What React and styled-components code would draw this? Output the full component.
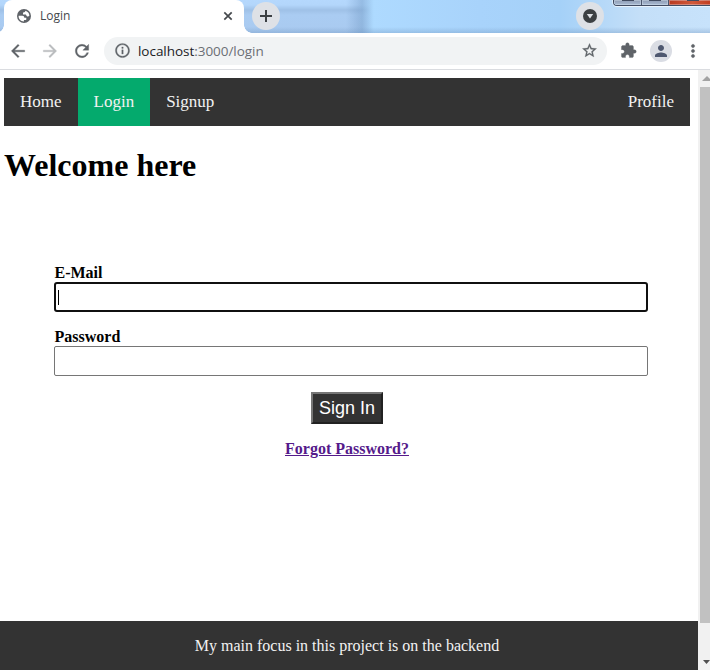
import React from "react";
import styled, { createGlobalStyle } from "styled-components";
import {
  MdArrowBack,
  MdArrowForward,
  MdRefresh,
  MdInfoOutline,
  MdStarBorder,
  MdExtension,
  MdPerson,
  MdMoreVert,
} from "react-icons/md";

const GlobalStyle = createGlobalStyle`
  * { box-sizing: border-box; }
  html, body { margin: 0; padding: 0; overflow: hidden; }
  body { background: #fff; font-family: "Liberation Serif", "Times New Roman", serif; }
`;

const Window = styled.div`
  width: 710px;
  height: 670px;
  display: flex;
  flex-direction: column;
  overflow: hidden;
  background: #fff;
`;

const TabStrip = styled.header`
  position: relative;
  height: 33px;
  flex: none;
  display: flex;
  align-items: flex-start;
  padding-left: 4px;
  background:
    linear-gradient(90deg, transparent 346px, rgba(105, 145, 190, 0.4) 362px, transparent 374px),
    linear-gradient(180deg, transparent 27px, rgba(110, 145, 185, 0.35) 33px),
    linear-gradient(90deg, transparent 358px, #aedaff 372px, #a8d3fb 480px, #a5d1f8 560px, #c4dff8 640px, #c7e2fb 710px),
    linear-gradient(180deg, #b5d8fd 0, #b3d6fb 5px, #9fc1e7 10px, #aaccf2 15px, #a9caf0 33px);
`;

const Tab = styled.div`
  position: relative;
  width: 240px;
  height: 33px;
  display: flex;
  align-items: center;
  padding: 0 11px 1px 13px;
  border-radius: 8px 8px 0 0;
  background: #fff;
  &::before,
  &::after {
    content: "";
    position: absolute;
    bottom: 0;
    width: 8px;
    height: 8px;
  }
  &::before {
    left: -8px;
    background: radial-gradient(circle at 0 0, transparent 7.5px, #fff 8px);
  }
  &::after {
    right: -8px;
    background: radial-gradient(circle at 100% 0, transparent 7.5px, #fff 8px);
  }
`;

const TabTitle = styled.span`
  flex: 1;
  margin-left: 9px;
  font: 12px/16px "Open Sans", "Noto Sans", sans-serif;
  color: #45494d;
`;

const RoundButton = styled.div`
  width: 28px;
  height: 28px;
  flex: none;
  display: grid;
  place-items: center;
  margin: 2px 0 0 ${(p) => p.$gap}px;
  border-radius: 50%;
  background: #dee1e6;
`;

const CaptionButtons = styled.div`
  position: absolute;
  top: 0;
  right: 0;
  display: flex;
  width: 97px;
  height: 6px;
  border: 1px solid #424c62;
  border-width: 0 0 1px 1px;
  border-radius: 0 0 0 4px;
  box-shadow: 0 1px 0 #e8f3fd, -1px 0 0 #dcecfa;
  overflow: hidden;
`;

const CaptionButton = styled.div`
  width: ${(p) => p.$width}px;
  flex: none;
  display: flex;
  justify-content: center;
  border-right: 1px solid #4b566d;
  background: ${(p) => (p.$close ? "linear-gradient(90deg, #b93a20, #d0583a 50%, #bd3519)" : "linear-gradient(#8e9bb3, #a9bbd3)")};
  box-shadow: inset 0 0 0 1px rgba(230, 240, 250, 0.35);
  &::before {
    content: "";
    width: 12px;
    height: 1px;
    background: #414b60;
  }
`;

const Toolbar = styled.div`
  height: 37px;
  flex: none;
  display: flex;
  align-items: center;
  padding: 0 6px 1px 8px;
  border-bottom: 1px solid #dadce0;
  background: #fff;
  color: #5f6368;
`;

const ToolIcon = styled.span`
  width: ${(p) => p.$size || 20}px;
  height: 20px;
  flex: none;
  display: grid;
  place-items: center;
  margin-right: ${(p) => p.$gap || 0}px;
  color: ${(p) => p.$color || "#5f6368"};
  svg path:not([fill="none"]) {
    stroke: currentColor;
    stroke-width: 0.4px;
  }
`;

const AddressBar = styled.div`
  width: 503px;
  height: 28px;
  display: flex;
  align-items: center;
  padding: 0 9px;
  margin-right: 11px;
  border-radius: 14px;
  background: #f1f3f4;
`;

const Url = styled.span`
  flex: 1;
  margin-left: 7px;
  font: 13.5px/20px "Open Sans", "Noto Sans", sans-serif;
  letter-spacing: -0.04px;
  color: #6b6f74;
  b {
    font-weight: 400;
    color: #202124;
  }
`;

const Avatar = styled.span`
  width: 22px;
  height: 22px;
  display: grid;
  place-items: center;
  margin-right: 11px;
  border-radius: 50%;
  background: #dadde4;
  color: #4e5870;
`;

const Viewport = styled.div`
  flex: 1;
  min-height: 0;
  display: flex;
`;

const Page = styled.div`
  width: 698px;
  display: flex;
  flex-direction: column;
  color: #000;
`;

const Nav = styled.nav`
  display: flex;
  height: 48px;
  flex: none;
  margin: 8px 8px 0 4px;
  background: #333;
`;

const NavLink = styled.a`
  padding: 14px 16px 0;
  font-size: 17px;
  line-height: 20px;
  color: #f2f2f2;
  background: ${(p) => (p.$active ? "#04aa6d" : "transparent")};
  margin-left: ${(p) => (p.$end ? "auto" : 0)};
`;

const Heading = styled.h1`
  margin: 21px 0 0 4px;
  padding-bottom: 1px;
  font-size: 32px;
  line-height: 37px;
`;

const Form = styled.form`
  flex: 1;
  display: flex;
  flex-direction: column;
  padding: 79px 50px 0 54px;
`;

const Label = styled.label`
  font-size: 16px;
  line-height: 18px;
  font-weight: 700;
  padding-left: 0.5px;
`;

const Field = styled.div`
  width: 100%;
  height: 30px;
  display: flex;
  align-items: center;
  padding-left: 2px;
  margin-bottom: 16px;
  border: ${(p) => (p.$focused ? "2px solid #101010" : "1px solid #767676")};
  border-radius: ${(p) => (p.$focused ? 3 : 2)}px;
  background: #fff;
`;

const Caret = styled.span`
  width: 1px;
  height: 15px;
  background: #000;
`;

const Actions = styled.div`
  display: flex;
  flex-direction: column;
  align-items: center;
  padding-right: 8px;
`;

const SubmitButton = styled.button`
  width: 72px;
  height: 32px;
  padding: 0;
  border: 2px solid;
  border-color: #767676 #212121 #212121 #767676;
  background: #333;
  color: #fff;
  font: 18px/24px "Liberation Sans", Arial, sans-serif;
`;

const ForgotLink = styled.a`
  margin-top: 16px;
  font-size: 16px;
  line-height: 18px;
  font-weight: 700;
  color: #551a8b;
  text-decoration: underline;
`;

const Footer = styled.footer`
  height: 49px;
  flex: none;
  padding: 16px 4px 0 0;
  background: #333;
  color: #f2f2f2;
  font-size: 16px;
  line-height: 18px;
  text-align: center;
`;

const Scrollbar = styled.div`
  width: 12px;
  display: flex;
  flex-direction: column;
  padding-left: 2px;
  background: #f1f1f1;
`;

const ScrollArrow = styled.svg`
  display: block;
  flex: none;
  width: 10px;
  height: 17px;
`;

const Thumb = styled.div`
  height: 536px;
  margin-bottom: 30px;
  background: #c1c1c1;
`;

const Globe = () => (
  <svg width="14" height="14" viewBox="0 0 14 14">
    <circle cx="7" cy="7" r="7" fill="#5f6368" />
    <path d="M8.3 1.8c2.4.6 4.1 2.7 4.1 5-.8.9-2.1 1-2.7.1-.5-.8-.5-1.5-1.5-1.5H6V4.1c0-.7.5-.9 1.2-.9.8 0 1.1-.7 1.1-1.4Z" fill="#fff" />
    <path d="M1.6 6.7h3.6c1.5 0 2.1.9 2.1 2.1h2v1.5c0 .7-.6.8-1.2.8H6.9v1.3C3.7 12.4 1.4 10 1.6 6.7Z" fill="#fff" />
  </svg>
);

const Cross = () => (
  <svg width="10" height="10" viewBox="0 0 10 10">
    <path d="M1.3 1.3l7.4 7.4m0-7.4l-7.4 7.4" stroke="#45494d" strokeWidth="1.7" />
  </svg>
);

const Plus = () => (
  <svg width="12" height="12" viewBox="0 0 12 12">
    <path d="M6 0v12M0 6h12" stroke="#3c4043" strokeWidth="2" />
  </svg>
);

const TabSearch = () => (
  <svg width="14" height="14" viewBox="0 0 14 14">
    <circle cx="7" cy="7" r="7" fill="#3c4043" />
    <path d="M3.8 5h6.4L7 9.4Z" fill="#dee1e6" />
  </svg>
);

export default function App() {
  return (
    <>
      <GlobalStyle />
      <Window>
        <TabStrip>
          <Tab>
            <Globe />
            <TabTitle>Login</TabTitle>
            <Cross />
          </Tab>
          <RoundButton $gap={8}><Plus /></RoundButton>
          <RoundButton $gap={296}><TabSearch /></RoundButton>
          <CaptionButtons>
            <CaptionButton $width={28} />
            <CaptionButton $width={27} />
            <CaptionButton $width={48} $close />
          </CaptionButtons>
        </TabStrip>
        <Toolbar>
          <ToolIcon $gap={12}><MdArrowBack size={20} /></ToolIcon>
          <ToolIcon $gap={12} $color="#babcbe"><MdArrowForward size={20} /></ToolIcon>
          <ToolIcon $gap={12}><MdRefresh size={20} /></ToolIcon>
          <AddressBar>
            <ToolIcon $size={18}><MdInfoOutline size={17} /></ToolIcon>
            <Url><b>localhost</b>:3000/login</Url>
            <ToolIcon $size={18}><MdStarBorder size={17} /></ToolIcon>
          </AddressBar>
          <ToolIcon $gap={12}><MdExtension size={17} /></ToolIcon>
          <Avatar><MdPerson size={18} /></Avatar>
          <ToolIcon><MdMoreVert size={20} /></ToolIcon>
        </Toolbar>
        <Viewport>
          <Page>
            <Nav>
              <NavLink>Home</NavLink>
              <NavLink $active>Login</NavLink>
              <NavLink>Signup</NavLink>
              <NavLink $end>Profile</NavLink>
            </Nav>
            <Heading>Welcome here</Heading>
            <Form>
              <Label>E-Mail</Label>
              <Field $focused><Caret /></Field>
              <Label>Password</Label>
              <Field />
              <Actions>
                <SubmitButton type="button">Sign In</SubmitButton>
                <ForgotLink>Forgot Password?</ForgotLink>
              </Actions>
            </Form>
            <Footer>My main focus in this project is on the backend</Footer>
          </Page>
          <Scrollbar>
            <ScrollArrow viewBox="0 0 10 17"><path d="M2 11h8V9L7 6Z" fill="#a3a3a3" /></ScrollArrow>
            <Thumb />
            <ScrollArrow viewBox="0 0 10 17"><path d="M3 7h7L6.5 11Z" fill="#505050" /></ScrollArrow>
          </Scrollbar>
        </Viewport>
      </Window>
    </>
  );
}
